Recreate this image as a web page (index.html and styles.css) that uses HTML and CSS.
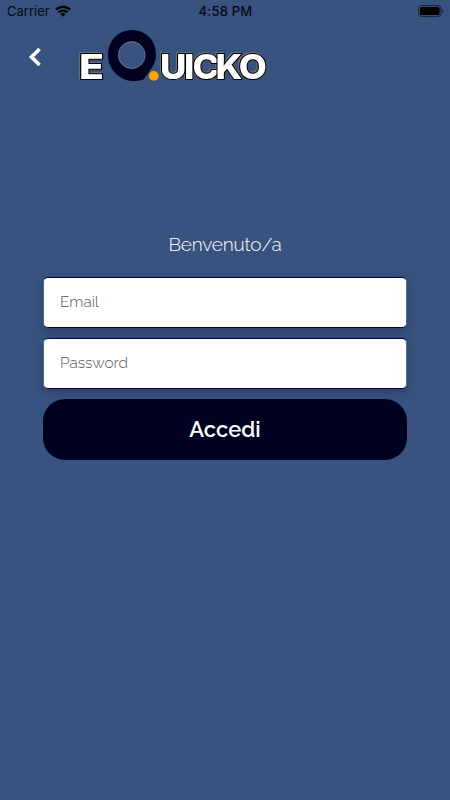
FILE: index.html
```html
<!DOCTYPE html>
<html lang="it">

<head>
    <meta charset="UTF-8">
    <meta name="viewport" content="width=device-width, initial-scale=1.0">
    <title>eQuicko</title>
    <link rel="stylesheet" href="styles.css">
</head>

<body>
    <div class="status-bar">
        <div class="carrier">
            <span>Carrier</span>
            <svg width="16" height="12" viewBox="0 0 16 12" fill="none" stroke="#000" stroke-width="2.3">
                <path d="M.9 4.7a10.2 10.2 0 0 1 14.2 0M3.4 7.4a6.6 6.6 0 0 1 9.2 0" />
                <path d="M8 11.8 5.5 9.3a3.6 3.6 0 0 1 5 0z" fill="#000" stroke="none" />
            </svg>
        </div>
        <span class="time">4:58 PM</span>
        <svg class="battery" width="27" height="12" viewBox="0 0 27 12">
            <rect x="1.6" y=".6" width="22.4" height="10.8" rx="3" fill="none" stroke="#14213a" />
            <rect x="3" y="2" width="19.6" height="8" rx="1.6" />
            <path d="M25.4 4.2c1.5.5 1.5 3.1 0 3.6z" fill="#14213a" />
        </svg>
    </div>

    <div class="header">
        <button class="back-button" type="button" aria-label="Indietro">
            <svg width="14" height="20" viewBox="0 0 14 20" fill="none" stroke="#fff" stroke-width="3.6">
                <path d="M12.6 1.9 4.5 10l8.1 8.1" />
            </svg>
        </button>
        <svg class="logo" width="194" height="58" viewBox="0 0 194 58">
            <g class="logo-text">
                <text x="1" y="51" textLength="25" lengthAdjust="spacingAndGlyphs">E</text>
                <text transform="scale(1.07 1)" x="76.6 99 107 128.5 150.3" y="51">UICKO</text>
            </g>
            <path fill="#000020" fill-rule="evenodd" d="M54 2c14 0 24 11 24 24 0 5-1 9-3 12L66 51c-2 1.5-6 2-12 2-13-1-24-12-24-26C30 13 40 2 54 2zM53.7 13.5c-7.5 0-13.2 6-13.2 13.5s5.7 13.7 13.2 13.7S67 34.5 67 27s-5.8-13.5-13.3-13.5z" />
            <circle cx="53.7" cy="27.1" r="13.4" fill="none" stroke="#858894" stroke-width=".7" />
            <circle cx="75.8" cy="47.9" r="4.9" fill="#ffa400" />
        </svg>
    </div>

    <div class="container">
        <h1>Benvenuto/a</h1>
        <form>
            <input class="form-input" type="email" name="email" placeholder="Email">
            <input class="form-input" type="password" name="password" placeholder="Password">
            <button class="submit-button" type="submit">Accedi</button>
        </form>
    </div>
</body>

</html>
```

FILE: styles.css
```css
body {
    font-family: Raleway, Lato, sans-serif;
    margin: 0;
    height: 800px;
    background-color: #38537f;
    overflow: hidden;
}

.status-bar {
    display: grid;
    grid-template-columns: 1fr auto 1fr;
    align-items: center;
    height: 22px;
    padding: 0 6px 0 7px;
    font-family: Inter, sans-serif;
    font-size: 13px;
    color: #050a14;
}

.carrier {
    display: flex;
    align-items: center;
    gap: 5px;
}

.time {
    font-weight: 500;
    letter-spacing: 0.2px;
}

.battery {
    justify-self: end;
}

.header {
    display: flex;
    align-items: flex-start;
    height: 62px;
    padding: 6px 0 0 27px;
}

.back-button {
    display: flex;
    margin: 19px 37px 0 0;
    padding: 0;
    background: none;
    border: none;
}

.logo {
    font-family: Inter, sans-serif;
    font-weight: 800;
    font-size: 34px;
}

.logo-text {
    fill: #fff;
    stroke: #000;
    stroke-width: 2px;
    stroke-linejoin: round;
    paint-order: stroke;
    filter: drop-shadow(0.7px 0.7px 0 #6a6e77) drop-shadow(-0.7px -0.7px 0 #6a6e77);
}

.container {
    padding: 142px 43px 0;
}

h1 {
    margin: 0 0 21px;
    font-size: 19px;
    font-weight: 300;
    line-height: 24px;
    letter-spacing: -0.15px;
    text-align: center;
    color: #fff;
}

form {
    display: flex;
    flex-direction: column;
    gap: 10px;
}

.form-input {
    box-sizing: border-box;
    width: 100%;
    height: 51px;
    padding: 0 16px 2px;
    font-family: inherit;
    font-size: 15.4px;
    font-weight: 300;
    background-color: #fff;
    border: 1px solid #000050;
    border-right-color: #53698e;
    border-left-color: #53698e;
    border-radius: 5px;
    box-shadow: 0 3px 8px rgba(30, 40, 60, 0.45);
}

.form-input::placeholder {
    color: #555;
}

.submit-button {
    height: 61px;
    padding: 0 0 2px;
    font-family: inherit;
    font-size: 22px;
    font-weight: 600;
    color: #fff;
    background-color: #000020;
    border: none;
    border-radius: 22px;
}
```
